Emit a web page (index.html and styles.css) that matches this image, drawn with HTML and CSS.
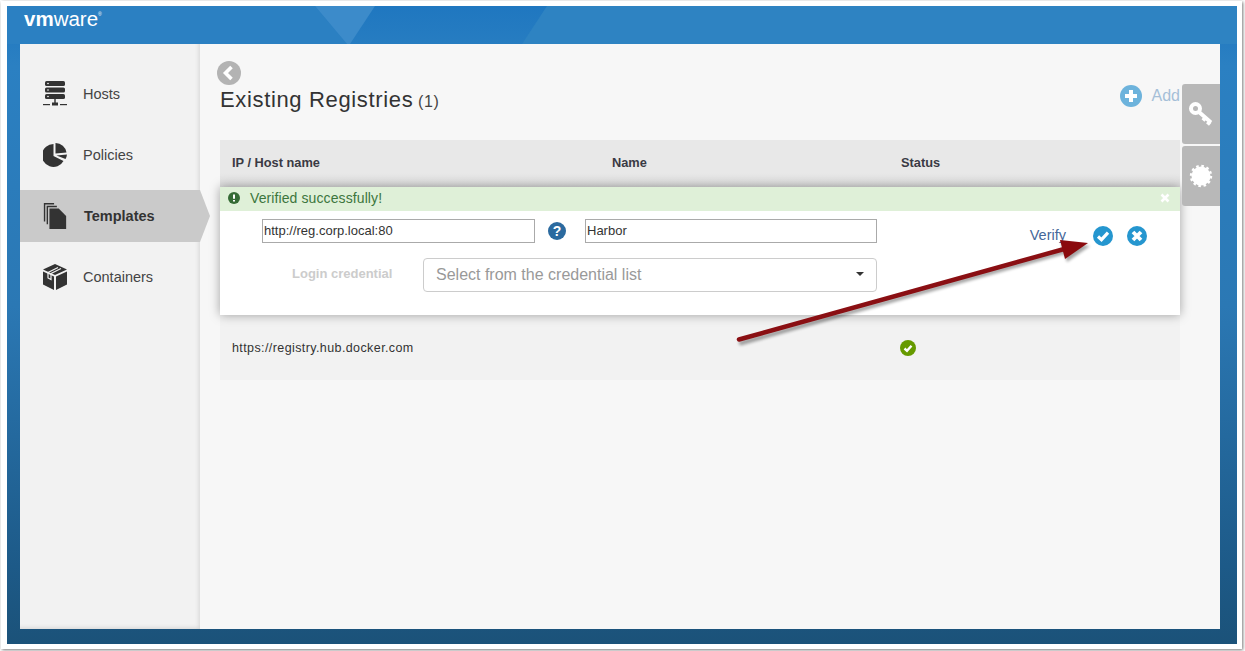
FILE: index.html
```html
<!DOCTYPE html>
<html lang="en">
<head>
<meta charset="utf-8">
<title>Existing Registries</title>
<link rel="stylesheet" href="styles.css">
</head>
<body>
<div class="sheet">
  <div class="frame">
    <svg class="banner-art" viewBox="0 0 1230 38" preserveAspectRatio="none" aria-hidden="true">
      <polygon points="0,0 308,0 340,38 0,38" fill="#2b80c2"/>
      <polygon points="308,0 368,0 343,38 340,38" fill="#3c8bca"/>
      <polygon points="540,0 1230,0 1230,38 515,38" fill="#2e83c2"/>
    </svg>
    <header class="topbar"><span class="logo"><b>vm</b>ware<sup>®</sup></span></header>
    <div class="app">
      <nav class="sidebar">
        <a class="nav-item">
          <svg class="nav-icon" viewBox="0 0 24 26"><g fill="#333"><rect x="2" y="0" width="20" height="5" rx="1.6"/><rect x="2" y="6.5" width="20" height="5" rx="1.6"/><rect x="2" y="13" width="20" height="5" rx="1.6"/><rect x="0" y="23" width="7" height="1.2"/><rect x="9" y="21.5" width="6" height="3"/><rect x="11.3" y="18" width="1.4" height="4"/><rect x="17" y="23" width="7" height="1.2"/></g><g fill="#fff"><circle cx="5" cy="2.5" r=".8"/><circle cx="5" cy="9" r=".8"/><circle cx="5" cy="15.5" r=".8"/></g></svg>
          <span>Hosts</span>
        </a>
        <a class="nav-item">
          <svg class="nav-icon" viewBox="0 0 24 24"><path fill="#333" d="M10.5 1A11.500 11.500 0 1 0 20.500 18L10.500 13Z"/><path fill="#333" d="M12.5 0A11 11 0 0 1 23.500 9.500L12.500 10.500Z"/><path fill="#333" d="M13.500 12.500L24 11.500A11 11 0 0 1 22.500 16Z"/></svg>
          <span>Policies</span>
        </a>
        <a class="nav-item active">
          <svg class="nav-icon" viewBox="0 0 24 28"><g fill="#333"><path d="M0 0H11V1.500H1.500V20H0Z"/><path d="M3 3H14V4.500H4.500V23H3Z"/><path d="M6 6H16L24 14V28H6Z"/></g></svg>
          <span>Templates</span>
        </a>
        <a class="nav-item">
          <svg class="nav-icon" viewBox="0 0 24 26"><path fill="#333" d="M12 0L24 5.500 12 11 0 5.500Z"/><path fill="#333" d="M0 7.500L11 12.500V26L0 20.500Z"/><path fill="#333" d="M13 12.500L24 7.500V20.500L13 26Z"/><path fill="none" stroke="#f2f2f2" stroke-width="1.200" d="M5 8.500L15 3.500M8 9.500L18 4.500M5 8.500V14L8 15.500V9.500"/></svg>
          <span>Containers</span>
        </a>
      </nav>
      <main class="content">
        <svg class="back" viewBox="0 0 24 24"><circle cx="12" cy="12" r="12" fill="#b3b3b3"/><path d="M14.500 6L8.500 12l6 6" fill="none" stroke="#fff" stroke-width="3.600"/></svg>
        <div class="title-row">
          <h1>Existing Registries <small>(1)</small></h1>
          <a class="add">
            <svg class="add-icon" viewBox="0 0 22 22"><circle cx="11" cy="11" r="11" fill="#6db3dc"/><path d="M11 5v12M5 11h12" stroke="#fff" stroke-width="4"/></svg>
            <span>Add</span>
          </a>
        </div>
        <section class="table">
          <div class="thead">
            <span class="c1">IP / Host name</span><span class="c2">Name</span><span class="c3">Status</span>
          </div>
          <div class="editor">
            <div class="alert">
              <svg class="alert-icon" viewBox="0 0 12 12"><circle cx="6" cy="6" r="6" fill="#356b35"/><path d="M6 2.500v4.200M6 8v1.600" stroke="#fff" stroke-width="2"/></svg>
              <span>Verified successfully!</span>
              <svg class="alert-close" viewBox="0 0 10 10"><path d="M1.500 1.500l7 7M8.500 1.500l-7 7" stroke="#fff" stroke-width="2.600"/></svg>
            </div>
            <div class="edit-grid">
              <div class="fields">
                <div class="line">
                  <input class="field url" value="http://reg.corp.local:80">
                  <svg class="help" viewBox="0 0 18 18"><circle cx="9" cy="9" r="9" fill="#2b6a9f"/><text x="9" y="14" text-anchor="middle" class="help-q">?</text></svg>
                  <input class="field name" value="Harbor">
                </div>
                <div class="line second">
                  <label>Login credential</label>
                  <div class="select"><span>Select from the credential list</span><i class="caret"></i></div>
                </div>
              </div>
              <div class="actions">
                <a class="verify">Verify</a>
                <svg class="act" viewBox="0 0 20 20"><circle cx="10" cy="10" r="10" fill="#2596cf"/><path d="M5 10.500l3.500 3.200 6.500-7" fill="none" stroke="#fff" stroke-width="3.200"/></svg>
                <svg class="act" viewBox="0 0 20 20"><circle cx="10" cy="10" r="10" fill="#2596cf"/><path d="M6 6l8 8M14 6l-8 8" stroke="#fff" stroke-width="3.800"/></svg>
              </div>
            </div>
          </div>
          <div class="row">
            <span class="c1">https://registry.hub.docker.com</span><span class="c2"></span>
            <span class="c3"><svg class="ok" viewBox="0 0 16 16"><circle cx="8" cy="8" r="8" fill="#669a00"/><path d="M4.500 8.500l2.500 2.300 4.500-5" fill="none" stroke="#fff" stroke-width="2.400"/></svg></span>
          </div>
        </section>
        <div class="side-tabs">
          <div class="tab"><svg viewBox="0 0 24 24"><g fill="none" stroke="#fff"><circle cx="6.500" cy="6.500" r="4.500" stroke-width="4"/><path d="M10 10L22 20.500M16.500 15.500l-2.500 3M21 19.500l-2.500 3" stroke-width="3.800"/></g></svg></div>
          <div class="tab"><svg viewBox="0 0 24 24"><circle cx="12" cy="12" r="9.500" fill="#fff"/><circle cx="12" cy="12" r="10" fill="none" stroke="#fff" stroke-width="2.400" stroke-dasharray="2.600 2.640"/></svg></div>
        </div>
      </main>
    </div>
  </div>
</div>
<svg class="arrow" viewBox="0 0 1245 651" aria-hidden="true">
  <g class="arrow-shadow"><path d="M740 341L1066 249" stroke="#000" stroke-width="4.500" stroke-linecap="round"/><polygon points="1089,244 1060,240 1066,260" fill="#000"/></g>
  <path d="M739 339.500L1066 248.500" stroke="#8a0f13" stroke-width="4.500" stroke-linecap="round"/>
  <polygon points="1088,243 1060,240 1065,259" fill="#8a0a0d"/>
</svg>
</body>
</html>
```
FILE: styles.css
```css
* { box-sizing: border-box; }
html, body { margin: 0; height: 651px; overflow: hidden; background: #fff; }
body { font-family: "Liberation Sans", Arial, sans-serif; color: #333; position: relative; }
.sheet { width: 1241px; height: 648px; margin-left: 1px; padding: 5px 5px 4px 6px; background: #fff; box-shadow: 1px 1px 3px #777; margin-top: 1px; }
.frame {
  position: relative; height: 638px; padding: 0 17px 0 13px; display: flex; flex-direction: column; overflow: hidden;
  background: linear-gradient(#1f77c0 0, #2b80c2 60px, #2b78b4 300px, #1d5a88 560px, #1b5279 638px);
}
.banner-art { position: absolute; left: 0; top: 0; width: 100%; height: 38px; }
.topbar { position: relative; height: 38px; flex: none; padding: 4px 0 0 4px; }
.logo { color: #fff; font-size: 20.500px; line-height: 18px; display: block; }
.logo b { font-weight: 700; }
.logo sup { font-size: 5px; vertical-align: 10px; line-height: 0; }
.app { display: flex; height: 585px; flex: none; }
.sidebar { position: relative; z-index: 1; width: 180px; flex: none; background: #f2f2f2; box-shadow: inset -3px -3px 4px -2px #d4d4d4; padding-top: 24px; display: flex; flex-direction: column; gap: 9px; }
.nav-item { position: relative; height: 52px; display: flex; align-items: center; padding-left: 23px; font-size: 14.500px; color: #444; }
.nav-item span { margin-left: 16px; }
.nav-icon { width: 24px; height: 26px; flex: none; }
.nav-item.active { background: #cacaca; color: #333; font-weight: 700; }
.nav-item.active span { margin-left: 17px; }
.nav-item.active::after { content: ""; position: absolute; left: 100%; top: 0; border-left: 10px solid #cacaca; border-top: 26px solid transparent; border-bottom: 26px solid transparent; }
.content { position: relative; flex: 1; background: #f7f7f7; padding: 17px 40px 0 20px; }
.back { display: block; width: 24px; height: 24px; margin-left: -3px; }
.title-row { display: flex; justify-content: space-between; height: 55px; padding-top: 2px; }
h1 { margin: 0; font-size: 22px; font-weight: 400; line-height: 26px; color: #333; letter-spacing: .65px; }
h1 small { font-size: 16px; color: #444; margin-left: -2px; }
.add { display: flex; align-items: center; height: 22px; gap: 10px; font-size: 16px; color: #a5bfd8; position: relative; top: -2px; }
.add-icon { width: 22px; height: 22px; }
.table { display: flex; flex-direction: column; }
.thead { height: 47px; background: linear-gradient(#e8e8e8 70%, #dcdcdc); display: flex; align-items: center; font-size: 12.800px; font-weight: 700; color: #3a3a44; padding-bottom: 3px; }
.c1 { width: 392px; padding-left: 12px; }
.c2 { width: 288px; }
.c3 { flex: 1; padding-left: 1px; }
.editor { position: relative; height: 128px; background: #fff; box-shadow: 0 0 10px rgba(0,0,0,.35); }
.alert { height: 24px; background: #dff0d8; display: flex; align-items: center; padding: 0 10px 2px 8px; color: #3c763d; font-size: 14px; letter-spacing: .1px; }
.alert span { margin-left: 10px; flex: 1; }
.alert-icon { width: 12px; height: 12px; }
.alert-close { width: 10px; height: 10px; margin-bottom: 1px; }
.edit-grid { display: flex; justify-content: space-between; }
.fields { padding: 8px 0 0 42px; }
.line { display: flex; align-items: center; }
.field { height: 24px; border: 1px solid #aaa; background: #fff; font: 13px "Liberation Sans", Arial, sans-serif; color: #333; padding: 0 1px 2px; outline: none; }
.url { width: 273px; }
.name { width: 292px; }
.help { width: 18px; height: 18px; margin: 0 19px 0 13px; }
.help-q { font: 700 14px "Liberation Sans", Arial, sans-serif; fill: #fff; }
.second { margin-top: 15px; }
.second label { width: 161px; padding: 0 0 3px 30px; font-size: 13px; font-weight: 700; color: #ccc; }
.select { width: 454px; height: 34px; border: 1px solid #ccc; border-radius: 4px; display: flex; align-items: center; justify-content: space-between; padding: 0 12px; font-size: 16px; color: #999; }
.caret { border-top: 4px solid #333; border-left: 4px solid transparent; border-right: 4px solid transparent; margin-bottom: 2px; }
.actions { display: flex; align-items: flex-start; padding: 15px 33px 0 0; }
.verify { font-size: 14.500px; color: #46679a; line-height: 18px; margin-right: 27px; }
.act { width: 20px; height: 20px; margin-left: 14px; }
.verify + .act { margin-left: 0; }
.row { height: 65px; display: flex; align-items: center; background: #f2f2f2; font-size: 12.500px; color: #333; letter-spacing: .4px; padding-top: 1px; }
.c3 .ok { margin-left: -1px; }
.ok { display: block; width: 16px; height: 16px; }
.side-tabs { position: absolute; right: 0; top: 40px; display: flex; flex-direction: column; gap: 2px; }
.tab { width: 38px; height: 60px; background: #b8b8b8; border-radius: 3px 0 0 3px; display: flex; align-items: center; justify-content: center; }
.tab svg { width: 24px; height: 24px; }
.arrow { position: absolute; left: 0; top: 0; width: 1245px; height: 651px; pointer-events: none; }
.arrow-shadow { opacity: .35; transform: translate(1px, 2px); filter: blur(1.500px); }
```
